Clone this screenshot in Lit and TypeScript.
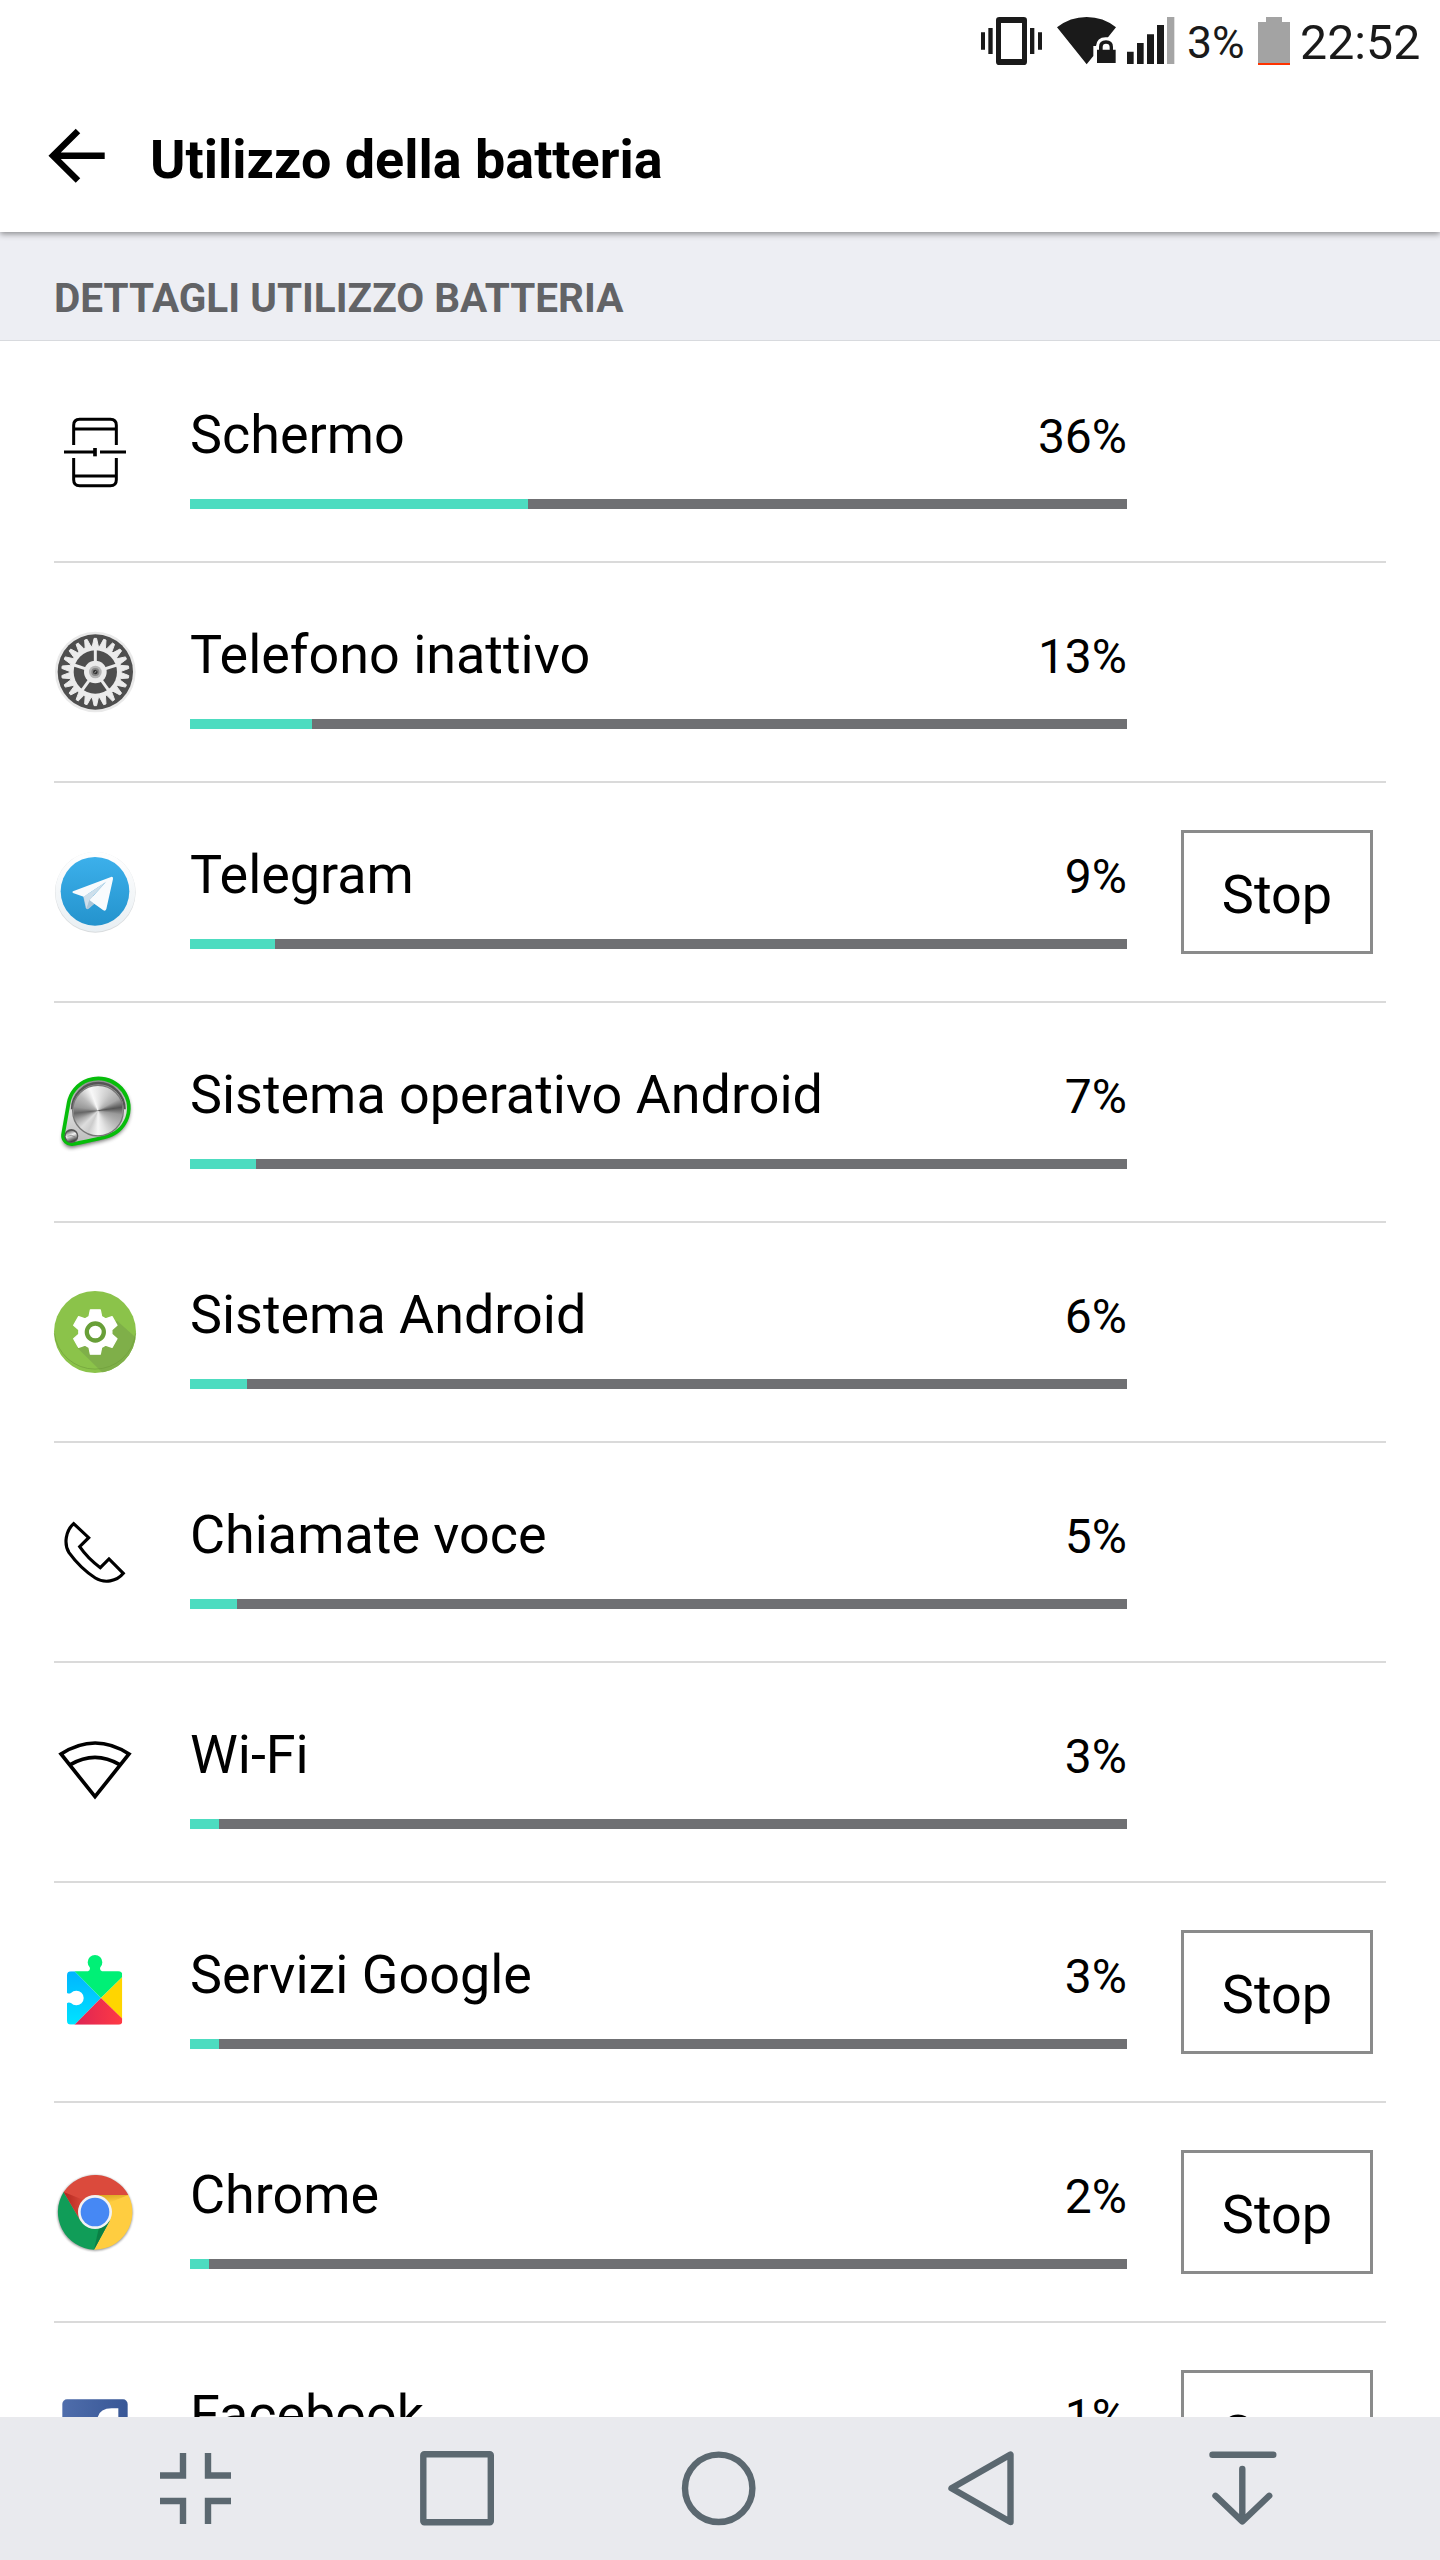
import { LitElement, html, svg, css } from "lit";
import { customElement } from "lit/decorators.js";

interface Usage {
  name: string;
  percent: number;
  icon: string;
  stop?: boolean;
}

const USAGE: Usage[] = [
  { name: "Schermo", percent: 36, icon: "screen" },
  { name: "Telefono inattivo", percent: 13, icon: "idle" },
  { name: "Telegram", percent: 9, icon: "telegram", stop: true },
  { name: "Sistema operativo Android", percent: 7, icon: "kernel" },
  { name: "Sistema Android", percent: 6, icon: "system" },
  { name: "Chiamate voce", percent: 5, icon: "phone" },
  { name: "Wi-Fi", percent: 3, icon: "wifi" },
  { name: "Servizi Google", percent: 3, icon: "services", stop: true },
  { name: "Chrome", percent: 2, icon: "chrome", stop: true },
  { name: "Facebook", percent: 1, icon: "facebook", stop: true },
];

// Outline of a toothed wheel centred on the origin.
function wheel(teeth: number, root: number, tip: number, wRoot: number, wTip: number) {
  const step = (Math.PI * 2) / teeth;
  const pts: string[] = [];
  for (let i = 0; i < teeth; i++) {
    const a = i * step - Math.PI / 2;
    for (const [r, o] of [[root, -wRoot], [tip, -wTip], [tip, wTip], [root, wRoot]]) {
      const t = a + o * step;
      pts.push(`${(r * Math.cos(t)).toFixed(1)} ${(r * Math.sin(t)).toFixed(1)}`);
    }
  }
  return `M${pts.join("L")}Z`;
}

const ICONS: Record<string, unknown> = {
  screen: svg`
    <g fill="none" stroke="#000" stroke-width="9">
      <path d="M101 165V106Q101 88 119 88H211Q229 88 229 106V165M101 204V269Q101 287 119 287H211Q229 287 229 269V204"/>
      <path d="M101 117H229M101 258H229M72 186H165M180 186H258"/>
      <path d="M165 174V199" stroke-width="11"/>
    </g>`,
  idle: svg`
    <circle cx="166" cy="186" r="121" fill="#e9e9e9"/>
    <circle cx="166" cy="186" r="113" fill="#4e4e4e"/>
    <g transform="translate(166 186)">
      <path d=${wheel(22, 78, 101, 0.4, 0.13)} fill="#ebebeb" stroke="#ebebeb" stroke-width="3" stroke-linejoin="round"/>
      <circle r="65" fill="#4e4e4e"/>
      ${[0, 72, 144, 216, 288].map((a) => svg`<path d="M0-25V-70" stroke="#ebebeb" stroke-width="9" transform="rotate(${a})"/>`)}
      <circle r="34" fill="#ebebeb"/>
      <circle r="19" fill="#b5b5b5"/>
      <circle r="12" fill="#858585"/>
      <circle r="7" fill="#333"/>
      <path d="M-3 4L3-4" stroke="#999" stroke-width="3"/>
    </g>`,
  telegram: svg`
    <defs>
      <linearGradient id="tg" x2="0" y2="1"><stop stop-color="#3cb0eb"/><stop offset="1" stop-color="#2493cd"/></linearGradient>
      <linearGradient id="rim" x2="0" y2="1"><stop stop-color="#fff"/><stop offset="1" stop-color="#e9eff3"/></linearGradient>
    </defs>
    <g transform="translate(0 30)">
      <circle cx="166" cy="157" r="121" fill="#d9dcde"/>
      <circle cx="166" cy="155" r="120" fill="url(#rim)"/>
      <circle cx="165" cy="154" r="103" fill="url(#tg)"/>
      <path d="M129 166L137 203Q140 210 146 206L172 184L150 160Z" fill="#b2cadb"/>
      <path d="M99 154L213 111Q220 109 219 117L199 207Q196 215 189 210L148 181L197 127L131 170L99 159Q95 156 99 154Z" fill="#f8fbfd"/>
      <path d="M131 170L200 124L148 180L140 206Z" fill="#cddfeb"/>
      <path d="M148 180L140 206L162 191Z" fill="#a9c5d8"/>
    </g>`,
  kernel: svg`
    <defs>
      <filter id="soft" x="-20%" y="-20%" width="140%" height="140%"><feGaussianBlur stdDeviation="7"/></filter>
      <linearGradient id="plate" x2="0" y2="1"><stop stop-color="#888"/><stop offset=".5" stop-color="#ddd"/><stop offset="1" stop-color="#bbb"/></linearGradient>
      <linearGradient id="nut" x2="0.4" y2="1"><stop stop-color="#444"/><stop offset=".5" stop-color="#f2f2f2"/><stop offset="1" stop-color="#444"/></linearGradient>
    </defs>
    <g transform="translate(0 30)">
      <path d="M86 128A91 91 0 1 1 206 228Q190 234 100 254A26 26 0 0 1 67 224Z" fill="#000" opacity=".6" transform="translate(2 8)" filter="url(#soft)"/>
      <path d="M86 128A91 89 0 1 1 206 228Q190 234 100 252A26 26 0 0 1 69 224Z" fill="url(#plate)" stroke="#06bd0a" stroke-width="11"/>
      <path d="M96 148A79 79 0 0 1 254 148" fill="none" stroke="#555" stroke-width="7"/>
      <foreignObject x="96" y="74" width="156" height="156"><div class="knob"></div></foreignObject>
      <circle cx="94" cy="228" r="21" fill="#555"/>
      <circle cx="94" cy="229" r="17" fill="url(#nut)"/>
      <path d="M82 229Q94 222 105 231" fill="none" stroke="#777" stroke-width="2"/>
    </g>`,
  system: svg`
    <clipPath id="disc"><circle cx="165" cy="186" r="123"/></clipPath>
    <circle cx="165" cy="186" r="123" fill="#8bc34a"/>
    <path d="M231 152L320 232V330H210L110 232Z" fill="#7faf49" clip-path="url(#disc)"/>
    <path d="M43 190A123 123 0 0 0 287 190" fill="none" stroke="#6f9e3b" stroke-width="2"/>
    <g transform="translate(166 186)">
      <path d=${wheel(6, 50, 68, 0.37, 0.21)} fill="#fff" stroke="#fff" stroke-width="4" stroke-linejoin="round"/>
      <circle r="25.5" fill="#fff" stroke="#689f38" stroke-width="13"/>
    </g>`,
  phone: svg`<path d="M101 101L146 143L119 170Q143 205 181 233L207 207L250 250C230 275 193 281 166 264C135 244 108 217 87 188C71 162 77 122 101 101Z" fill="none" stroke="#000" stroke-width="9.5"/>`,
  wifi: svg`<g fill="none" stroke="#000" stroke-width="11"><path d="M63 132Q166 66 267 132L165 260Z"/><path d="M91 164Q165 120 239 164"/></g>`,
  services: svg`
    <defs>
      <linearGradient id="sb" x2="0" y2="1"><stop stop-color="#00b4ff"/><stop offset="1" stop-color="#00e4ff"/></linearGradient>
      <linearGradient id="sr" x2="1" y2="0"><stop stop-color="#dc2455"/><stop offset="1" stop-color="#ff3a44"/></linearGradient>
      <clipPath id="sq"><path d="M93 124H144Q152 121 149 112A22 22 0 1 1 181 112Q178 121 186 124H235Q247 124 247 136V272Q247 284 235 284H93Q81 284 81 272V220Q85 215 93 219A22 22 0 1 0 93 189Q85 193 81 188V136Q81 124 93 124Z"/></clipPath>
    </defs>
    <g clip-path="url(#sq)">
      <path d="M81 124H104L183 204L104 284H81Z" fill="url(#sb)"/>
      <path d="M104 124L120 70H220L247 124V141L183 204Z" fill="#00f076"/>
      <path d="M248 140V268L183 204Z" fill="#ffd500"/>
      <path d="M103 285L183 204L248 267V285Z" fill="url(#sr)"/>
    </g>`,
  chrome: svg`
    <defs>
      <filter id="drop" x="-20%" y="-20%" width="140%" height="140%"><feGaussianBlur stdDeviation="3"/></filter>
      <linearGradient id="cs"><stop stop-color="#b3261d"/><stop offset="1" stop-color="#db4a3c"/></linearGradient>
      <linearGradient id="cy" x2="0.4" y2="1"><stop stop-color="#d9a420"/><stop offset="1" stop-color="#ffcd40"/></linearGradient>
    </defs>
    <circle cx="165" cy="189" r="113" fill="#000" opacity=".4" filter="url(#drop)"/>
    <path d="M71 126A113 113 0 0 1 265 135H165V186L121 212Z" fill="#db4a3c"/>
    <path d="M265 135A113 113 0 0 1 162 299L209 212L165 186V135Z" fill="#ffcd40"/>
    <path d="M162 299A113 113 0 0 1 71 126L121 212L165 186L209 212Z" fill="#109d58"/>
    <path d="M71 126L115 200V180L133 151Z" fill="url(#cs)"/>
    <path d="M165 135H265L208 158Z" fill="url(#cy)"/>
    <path d="M209 212L162 299L176 236Z" fill="#0a8045"/>
    <circle cx="165" cy="186" r="51" fill="#f2f2f2"/>
    <circle cx="165" cy="186" r="43" fill="#4688f4"/>`,
  facebook: svg`
    <defs><linearGradient id="fb"><stop stop-color="#4f6dab"/><stop offset="1" stop-color="#385796"/></linearGradient></defs>
    <rect x="67" y="88" width="196" height="196" rx="14" fill="url(#fb)"/>
    <path d="M235 115V147H217Q204 147 204 163V183H235L230 215H204V284H171V215H148V183H171V158Q171 115 215 115Z" fill="#fff"/>`,
};

const NAV = [
  svg`<path d="M160 2475.5H183V2453M231 2475.5H208V2453M160 2501H183V2524M231 2501H208V2524"/>`,
  svg`<rect x="423.3" y="2454.3" width="67.5" height="68" rx="1"/>`,
  svg`<circle cx="718.7" cy="2488.3" r="33.7"/>`,
  svg`<path d="M1010.5 2454.5V2522L951.5 2488.3Z"/>`,
  svg`<path d="M1212.5 2454.8H1273.3M1242.3 2469V2520M1215.5 2495.8L1242.3 2521.5L1269.2 2495.8" stroke-linecap="round"/>`,
];

@customElement("app-root")
export class AppRoot extends LitElement {
  static styles = css`
    :host {
      display: flex;
      flex-direction: column;
      width: 1440px;
      height: 2560px;
      overflow: hidden;
      background: #fff;
      color: #000;
      font-family: Roboto, sans-serif;
    }
    * { box-sizing: border-box; }
    svg { display: block; flex: none; }
    .status {
      display: flex;
      flex: none;
      height: 82px;
      padding: 15px 0 0 980px;
      color: #1a1a1a;
      white-space: nowrap;
    }
    .wifi { margin-left: 12px; }
    .signal { margin-left: 9px; }
    .level { width: 81px; padding-left: 11px; font-size: 44.5px; line-height: 56px; }
    .clock { padding-left: 9px; font-size: 48.3px; line-height: 55px; }
    .header {
      display: flex;
      flex: none;
      height: 150px;
      padding: 45px 0 0 48px;
      z-index: 1;
      background: #fff;
      box-shadow: 0 2px 6px rgba(0, 0, 0, 0.42);
      clip-path: inset(0 0 -12px 0);
    }
    .title {
      margin: 0 0 0 42px;
      font-size: 53.9px;
      font-weight: 700;
      line-height: 66px;
      white-space: nowrap;
    }
    .section {
      flex: none;
      height: 109px;
      margin: 0 0 2px;
      padding: 39px 54px 0;
      border-bottom: 1px solid #d8dade;
      background: #edeef3;
      color: #626366;
      font-size: 40.5px;
      font-weight: 700;
      line-height: 55px;
    }
    .list { flex: 1; min-height: 0; overflow: hidden; }
    .row { display: flex; height: 218px; padding-left: 40px; }
    .divider { height: 2px; margin: 0 54px; background: #dadada; }
    .icon { width: 120px; height: 120px; margin-top: 47px; }
    .knob {
      width: 156px;
      height: 156px;
      border-radius: 50%;
      border: 4px solid #777;
      background: conic-gradient(#e8e8e8, #ccc 30deg, #aaa 60deg, #555 82deg, #999 100deg, #bbb 130deg, #e2e2e2 160deg, #f6f6f6 180deg, #ccc 205deg, #ddd 225deg, #aaa 245deg, #666 264deg, #999 280deg, #bbb 310deg, #f8f8f8 340deg, #e8e8e8);
    }
    .body { width: 937px; margin-left: 30px; padding-top: 60px; }
    .line {
      display: flex;
      align-items: baseline;
      justify-content: space-between;
      height: 96px;
      line-height: 64px;
      font-size: 53.9px;
      white-space: nowrap;
    }
    .percent { font-size: 48px; }
    .bar { height: 10px; background: #6f7073; }
    .fill { height: 10px; background: #4ddcc0; }
    .stop {
      width: 192px;
      height: 124px;
      margin: 47px 0 0 54px;
      padding: 3px 0 0;
      border: 3px solid #8a8b8b;
      background: #fff;
      color: #000;
      font: 400 54px/118px Roboto, sans-serif;
      text-align: center;
    }
    .nav {
      display: grid;
      flex: none;
      grid-template-columns: repeat(5, 262px);
      justify-content: center;
      height: 143px;
      background: #e9eaee;
    }
  `;

  render() {
    return html`
      <div class="status">
        <svg width="64" height="52" viewBox="60 45 192 156" fill="#1a1a1a">
          <path fill-rule="evenodd" d="M118 51H191Q201 51 201 61V185Q201 195 191 195H118Q108 195 108 185V61Q108 51 118 51ZM123 69V177H186V69Z"/>
          <path d="M63 97H75V149H63ZM85 84H98V162H85ZM210 84H223V162H210ZM234 97H246V149H234Z"/>
        </svg>
        <svg class="wifi" width="61" height="52" viewBox="288 45 183 156" fill="#1a1a1a">
          <path d="M291 82Q330 51 380 51Q430 51 468 82L444 112Q411 108 408 138H400V168L380 193Z"/>
          <path d="M411 149H417V141Q417 121 438 121Q459 121 459 141V149H467V189H411ZM428 149H449V141Q449 131 438 131Q428 131 428 141Z" fill-rule="evenodd"/>
        </svg>
        <svg class="signal" width="50" height="52" viewBox="498 45 150 156" fill="#1a1a1a">
          <path d="M501 155H521V192H501ZM531 129H551V192H531ZM561 103H582V192H561ZM591 75H612V192H591Z"/>
          <path d="M621 51H643V192H621Z" fill="#a5a5a5"/>
        </svg>
        <span class="level">3%</span>
        <svg width="34" height="52" viewBox="891 45 102 156">
          <path d="M918 51H966V66H990V189H894V66H918Z" fill="#a3a3a3"/>
          <path d="M894 189H990V195H894Z" fill="#ff3300"/>
        </svg>
        <span class="clock">22:52</span>
      </div>
      <header class="header">
        <svg width="60" height="58" viewBox="48 127 60 58" fill="none" stroke="#000" stroke-width="6.4">
          <path d="M78 131L53 155.8L78 180.6M53 155.8H104.7"/>
        </svg>
        <h1 class="title">Utilizzo della batteria</h1>
      </header>
      <h2 class="section">DETTAGLI UTILIZZO BATTERIA</h2>
      <main class="list">
        ${USAGE.map((u) => html`
          <div class="row">
            <svg class="icon" viewBox="0 0 360 360">${ICONS[u.icon]}</svg>
            <div class="body">
              <div class="line"><span>${u.name}</span><span class="percent">${u.percent}%</span></div>
              <div class="bar"><div class="fill" style="width:${Math.ceil(u.percent * 9.37)}px"></div></div>
            </div>
            ${u.stop ? html`<button class="stop">Stop</button>` : ""}
          </div>
          <div class="divider"></div>`)}
      </main>
      <nav class="nav">
        ${NAV.map((shape, i) => html`
          <svg width="262" height="143" viewBox="${65 + 262 * i} 2417 262 143" fill="none"
            stroke="#5b6870" stroke-width="6.4" stroke-linejoin=${i === 0 ? "miter" : "round"}>${shape}</svg>`)}
      </nav>
    `;
  }
}
